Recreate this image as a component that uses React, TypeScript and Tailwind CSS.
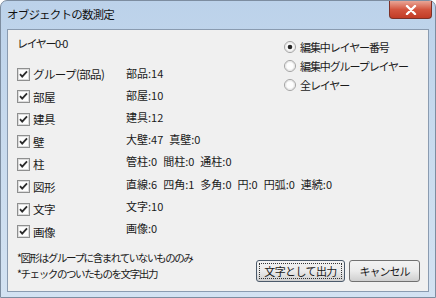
import React from "react";

const font = { fontFamily: '"MS UI Gothic", "Noto Sans CJK JP", sans-serif' };

const CheckBox = () => (
  <svg width="13" height="13" viewBox="0 0 13 13" className="shrink-0">
    <rect x="0.5" y="0.5" width="12" height="12" fill="#f4f4f4" stroke="#8e8f8f" />
    <rect x="1.5" y="1.5" width="10" height="10" fill="#fdfdfd" stroke="#dcdcdc" />
    <path d="M3 6.2 L5.2 8.6 L10 3.4" fill="none" stroke="#2b2b2b" strokeWidth="1.8" />
  </svg>
);

const Radio = ({ on }: { on?: boolean }) => (
  <svg width="12" height="12" viewBox="0 0 12 12" className="shrink-0">
    <circle cx="6" cy="6" r="5.5" fill="#f6f6f6" stroke="#a2a2a2" />
    <circle cx="6" cy="6" r="4.3" fill="#fdfdfd" stroke="#e4e4e4" />
    {on && <circle cx="6" cy="6" r="2.3" fill="#262626" />}
  </svg>
);

const items = ["グループ(部品)", "部屋", "建具", "壁", "柱", "図形", "文字", "画像"];
const values = [
  ["部品:14"],
  ["部屋:10"],
  ["建具:12"],
  ["大壁:47", "真壁:0"],
  ["管柱:0", "間柱:0", "通柱:0"],
  ["直線:6", "四角:1", "多角:0", "円:0", "円弧:0", "連続:0"],
  ["文字:10"],
  ["画像:0"],
];

const radios = ["編集中レイヤー番号", "編集中グループレイヤー", "全レイヤー"];

export default function App() {
  return (
    <div className="w-[436px] h-[298px] bg-white text-[#1a1a1a] overflow-hidden" style={font}>
      <div className="w-[436px] h-[298px] rounded-t-[7px] border border-[#7d8da0] bg-gradient-to-b from-[#bcd2ea] via-[#c9dbee] to-[#d3e2f2] flex flex-col">
        {/* title bar */}
        <div className="h-[28px] flex items-start justify-between shrink-0">
          <div className="pl-[6px] pt-[6px] text-[11.5px] leading-[14px] tracking-[-0.8px] text-[#111] whitespace-nowrap">
            オブジェクトの数測定
          </div>
          <div className="mr-[3px] w-[43px] h-[18px] rounded-b-[4px] border border-t-0 border-[#7c3128] bg-gradient-to-b from-[#e8a596] via-[#d3553f] to-[#c13b26] flex items-center justify-center">
            <svg width="12" height="10" viewBox="0 0 12 10">
              <path d="M2 1 L10 9 M10 1 L2 9" stroke="#ffffff" strokeWidth="2.4" strokeLinecap="round" />
            </svg>
          </div>
        </div>

        {/* client area */}
        <div className="mx-[6px] h-[263px] border border-[#8a9bb0] bg-[#f0f0f0] flex flex-col text-[11px] shrink-0">
          <div className="flex">
            <div className="w-[270px] shrink-0 pl-[9px] pt-[6px]">
              <div className="h-[14px] leading-[14px] tracking-[-1.4px]">レイヤー0-0</div>
              <div className="flex mt-[13px]">
                <div className="w-[109px] shrink-0 flex flex-col">
                  {items.map((t) => (
                    <div key={t} className="h-[22.5px] flex items-center gap-[3px] whitespace-nowrap">
                      <CheckBox />
                      <span className="text-[11.5px] leading-[14px] tracking-[-0.6px]">{t}</span>
                    </div>
                  ))}
                </div>
                <div className="flex flex-col -mt-[1px]">
                  {values.map((row, i) => (
                    <div key={i} className="h-[22.1px] flex items-center gap-[6px] whitespace-nowrap">
                      {row.map((v) => (
                        <span key={v} className="leading-[14px]">{v}</span>
                      ))}
                    </div>
                  ))}
                </div>
              </div>
            </div>
            <div className="pl-[6px] pt-[7px] flex flex-col">
              {radios.map((r, i) => (
                <div key={r} className="h-[19px] flex items-center gap-[4px] whitespace-nowrap">
                  <Radio on={i === 0} />
                  <span className="leading-[14px] tracking-[-1.1px]">{r}</span>
                </div>
              ))}
            </div>
          </div>

          <div className="mt-auto flex items-end justify-between pl-[9px] pr-[8px] pb-[9px]">
            <div className="flex flex-col text-[10.5px] tracking-[-1.4px] whitespace-nowrap">
              <div className="h-[16px] leading-[16px]">*図形はグループに含まれていないもののみ</div>
              <div className="h-[16px] leading-[16px]">*チェックのついたものを文字出力</div>
            </div>
            <div className="flex gap-[4px] shrink-0">
              <button className="w-[89px] h-[22px] rounded-[3px] border border-[#4b5a6b] bg-gradient-to-b from-[#f2f2f2] via-[#ebebeb] to-[#cfcfcf] p-[2px] text-[11px] tracking-[-0.6px] whitespace-nowrap">
                <div className="w-full h-full border border-dotted border-[#333] flex items-center justify-center leading-[14px]">
                  文字として出力
                </div>
              </button>
              <button className="w-[71px] h-[22px] rounded-[3px] border border-[#707070] bg-gradient-to-b from-[#f2f2f2] via-[#ebebeb] to-[#cfcfcf] text-[11px] tracking-[-1px] leading-[14px] whitespace-nowrap">
                キャンセル
              </button>
            </div>
          </div>
        </div>
      </div>
    </div>
  );
}
